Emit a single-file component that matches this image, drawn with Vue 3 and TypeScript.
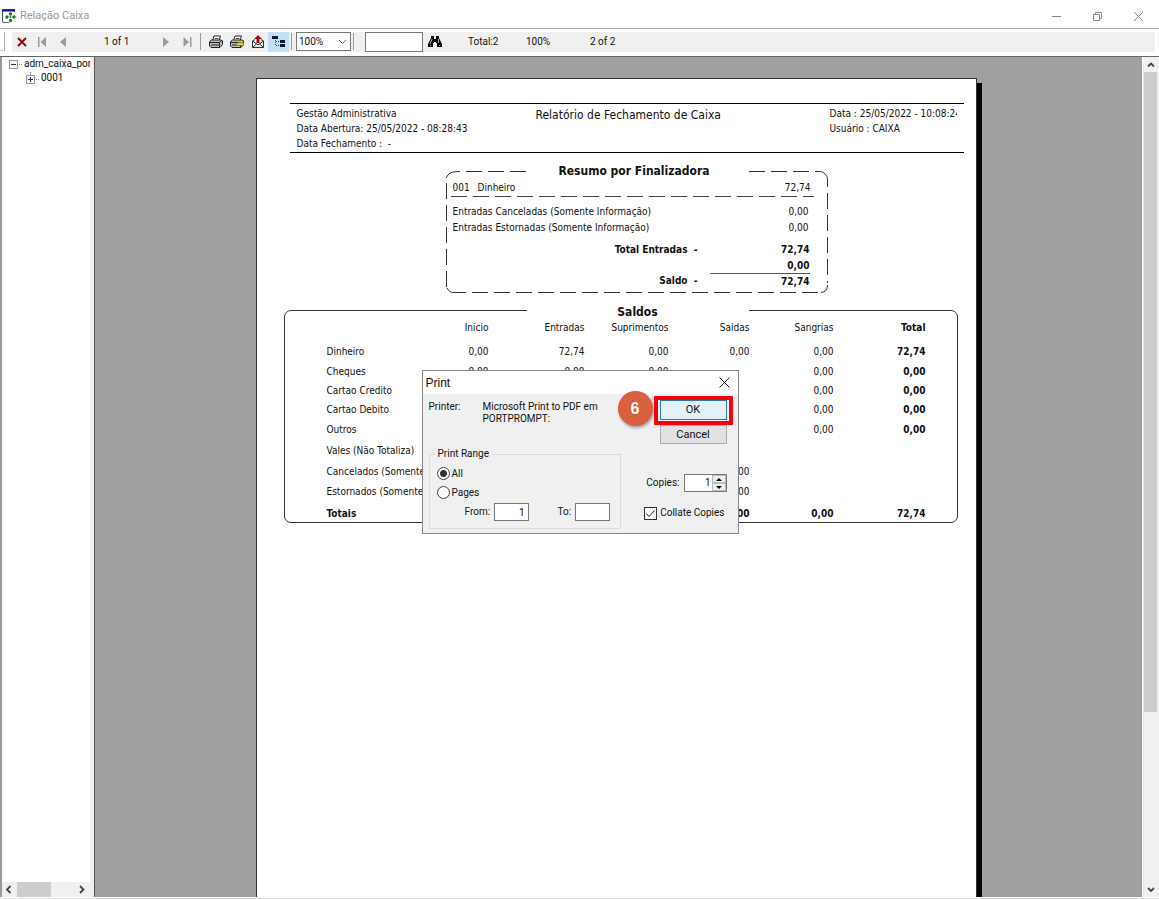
<script setup lang="ts">
import { ref } from 'vue'

interface BalanceRow {
  label: string
  values: string[]
  total: string
  size: string
  strong?: boolean
}

const columns = ['Inicio', 'Entradas', 'Suprimentos', 'Saidas', 'Sangrias']

const balances: BalanceRow[] = [
  { label: 'Dinheiro', values: ['0,00', '72,74', '0,00', '0,00', '0,00'], total: '72,74', size: 'h22' },
  { label: 'Cheques', values: ['0,00', '0,00', '0,00', '', '0,00'], total: '0,00', size: 'h18' },
  { label: 'Cartao Credito', values: ['', '', '', '', '0,00'], total: '0,00', size: 'h20' },
  { label: 'Cartao Debito', values: ['', '', '', '', '0,00'], total: '0,00', size: 'h18' },
  { label: 'Outros', values: ['', '', '', '', '0,00'], total: '0,00', size: 'h22' },
  { label: 'Vales (Não Totaliza)', values: ['', '', '', '', ''], total: '', size: 'h20' },
  { label: 'Cancelados (Somente Informação)', values: ['', '', '', '0,00', ''], total: '', size: 'h22' },
  { label: 'Estornados (Somente Informação)', values: ['', '', '', '0,00', ''], total: '', size: 'h18' },
  { label: 'Totais', values: ['', '', '', '0,00', '0,00'], total: '72,74', size: 'h26', strong: true },
]

const range = ref('all')
const fromPage = ref('1')
const toPage = ref('')
const copies = ref('1')
const collate = ref(true)
const zoomLevel = ref('100%')
const search = ref('')
</script>

<template>
  <div class="window">
    <header class="titlebar">
      <svg class="app-icon" width="14" height="14" viewBox="0 0 14 14">
        <rect x="0" y="0" width="13" height="13" fill="#fff" stroke="none" />
        <path d="M.5 13V.5H12.500V3" fill="none" stroke="#444a60" />
        <path d="M0 1.500H13" stroke="#10109a" stroke-width="2" />
        <path d="M.5 13.500H7" stroke="#667" />
        <g fill="#157a20">
          <circle cx="8.500" cy="5" r="1.700" /><circle cx="5" cy="8" r="1.700" />
          <circle cx="12" cy="8" r="1.700" /><circle cx="8.500" cy="11.500" r="1.700" /><circle cx="8.500" cy="8" r="1" />
        </g>
      </svg>
      <span class="caption">Relação Caixa</span>
      <div class="caption-buttons">
        <button aria-label="Minimize"><svg width="11" height="11" viewBox="0 0 11 11"><path d="M1 5.500H10" stroke="#888" /></svg></button>
        <button aria-label="Restore"><svg width="11" height="11" viewBox="0 0 11 11" fill="none" stroke="#888"><path d="M1.500 3.500H7.500V9.500H1.500ZM3.500 3.500V1.500H9.500V7.500H7.500" /></svg></button>
        <button aria-label="Close"><svg width="11" height="11" viewBox="0 0 11 11"><path d="M1 1L10 10M10 1L1 10" stroke="#888" /></svg></button>
      </div>
    </header>

    <div class="toolbar">
      <span class="grip"></span>
      <div class="tools">
        <button class="tool close-tool" aria-label="Close report"><svg width="10" height="10" viewBox="0 0 10 10"><path d="M1 1L9 9M9 1L1 9" stroke="#900c0c" stroke-width="2" /></svg></button>
        <button class="tool" aria-label="First page"><svg width="10" height="12" viewBox="0 0 10 12" fill="#9b9b9b"><path d="M1 1H2.500V11H1ZM9 1V11L3.500 6Z" /></svg></button>
        <button class="tool" aria-label="Previous page"><svg width="10" height="12" viewBox="0 0 10 12" fill="#9b9b9b"><path d="M8 1V11L2 6Z" /></svg></button>
        <span class="page-count">1 of 1</span>
        <button class="tool" aria-label="Next page"><svg width="10" height="12" viewBox="0 0 10 12" fill="#9b9b9b"><path d="M2 1V11L8 6Z" /></svg></button>
        <button class="tool" aria-label="Last page"><svg width="10" height="12" viewBox="0 0 10 12" fill="#9b9b9b"><path d="M8 1H9.500V11H8ZM1.500 1V11L7 6Z" /></svg></button>
        <span class="sep"></span>
        <button class="tool" aria-label="Print">
          <svg width="16" height="14" viewBox="0 0 16 14">
            <path d="M4.500 5.500L6 1H12.500L11 5.500" fill="#fff" stroke="#222" />
            <path d="M6.500 3.500H10.500" stroke="#555" />
            <path d="M1.500 6.500L3.500 5H13.500L14.500 6V9.500L12 12.500H3L1.500 11Z" fill="#bbb" stroke="#222" />
            <path d="M1.500 7.500H11.500V12M11.500 7.500L14 5.500M3 10H11" fill="none" stroke="#222" />
            <path d="M9 9H10.500" stroke="#3c3" />
          </svg>
        </button>
        <button class="tool" aria-label="Print setup">
          <svg width="16" height="14" viewBox="0 0 16 14">
            <path d="M4.500 5.500L6 1H12.500L11 5.500" fill="#fff" stroke="#222" />
            <path d="M6.500 3.500H10.500" stroke="#555" />
            <path d="M1.500 6.500L3.500 5H13.500L14.500 6V9.500L12 12.500H3L1.500 11Z" fill="#bbb" stroke="#222" />
            <path d="M1.500 7.500H11.500V12M3 10H8" fill="none" stroke="#222" />
            <path d="M7 9.500L9 7.500H14.500V10.500H9Z" fill="#e5cd1c" stroke="#847510" stroke-width=".7" />
          </svg>
        </button>
        <button class="tool" aria-label="Export">
          <svg width="14" height="14" viewBox="0 0 14 14">
            <path d="M1.500 6L4 4.500M12.500 6L10 4.500M1.500 6V12.500H12.500V6L7 10L1.500 6M1.500 12.500L5.500 9M12.500 12.500L8.500 9" fill="#fff" stroke="#203545" />
            <path d="M7 0L11 4H8.500V8H5.500V4H3Z" fill="#a01018" />
          </svg>
        </button>
        <button class="tool tree-tool" aria-label="Toggle group tree">
          <svg width="14" height="12" viewBox="0 0 14 12">
            <path d="M0 0H6V3H0ZM8 4H13V7H8ZM8 8H13V11H8Z" fill="#111b2e" />
            <path d="M3.500 4V9.500H7M4 5.500H7" fill="none" stroke="#444" stroke-dasharray="1 1" />
          </svg>
        </button>
        <span class="sep short"></span>
        <select v-model="zoomLevel" class="zoom" aria-label="Zoom"><option>100%</option></select>
        <span class="sep short"></span>
        <input v-model="search" class="search" type="text" aria-label="Search text" />
        <button class="tool find" aria-label="Search">
          <svg width="14" height="13" viewBox="0 0 14 13">
            <path d="M3 1H6V4H8V1H11V3L14 9V12H9V8H8V7H6V8H5V12H0V9L3 3Z" fill="#000" />
            <path d="M4 4L2 9M10.500 4V8M2 10.500H3M11 10.500H12" stroke="#ddd" stroke-width=".8" />
          </svg>
        </button>
        <span class="stat total">Total:2</span>
        <span class="stat percent">100%</span>
        <span class="stat">2 of 2</span>
      </div>
    </div>

    <main class="body">
      <aside class="tree">
        <ul class="nodes">
          <li class="node">
            <svg width="15" height="9" viewBox="0 0 15 9"><rect x=".5" y=".5" width="8" height="8" fill="#f6f6f6" stroke="#999" /><path d="M2 4.500H7" stroke="#234" /><path d="M10 4.500H13" stroke="#888" stroke-dasharray="1 1" /></svg>
            <span>adm_caixa_por</span>
          </li>
          <li class="node child">
            <svg width="15" height="12" viewBox="0 0 15 12"><path d="M4.500 0V3M10 7.500H13" stroke="#888" stroke-dasharray="1 1" /><rect x=".5" y="3.500" width="8" height="8" fill="#f6f6f6" stroke="#999" /><path d="M2 7.500H7M4.500 5V10" stroke="#336" /></svg>
            <span>0001</span>
          </li>
        </ul>
        <div class="hscroll">
          <svg width="15" height="15" viewBox="0 0 15 15"><path d="M8.500 4L5 7.500L8.500 11" fill="none" stroke="#444" stroke-width="1.800" /></svg>
          <span class="hthumb"></span>
          <svg width="15" height="15" viewBox="0 0 15 15"><path d="M6 4L9.500 7.500L6 11" fill="none" stroke="#444" stroke-width="1.800" /></svg>
        </div>
      </aside>

      <section class="viewer">
        <article class="paper">
          <header class="report-head">
            <div class="head-left">
              <p>Gestão Administrativa</p>
              <p>Data Abertura: 25/05/2022 - 08:28:43</p>
              <p>Data Fechamento :&nbsp; -</p>
            </div>
            <h1>Relatório de Fechamento de Caixa</h1>
            <div class="head-right">
              <p>Data : 25/05/2022 - 10:08:24</p>
              <p>Usuário : CAIXA</p>
            </div>
          </header>

          <section class="summary">
            <svg class="dashes" width="382" height="122" viewBox="0 0 382 122" fill="none" stroke="#333">
              <path d="M.5 7Q.5 5 3 3Q5 .5 14 .5" />
              <path d="M20 .5H80M303 .5H374" stroke-dasharray="16 6" />
              <path d="M.5 12V116M381.500 22V112" stroke-dasharray="16 6" />
              <path d="M371 .5H374Q377 .5 379 3Q381.500 5 381.500 8V16" />
              <path d="M1 117Q3 121.500 8 121.500H20M375 121.500Q381.500 121 381.500 114" />
              <path d="M26 121.500H376" stroke-dasharray="16 6" />
            </svg>
            <h2>Resumo por Finalizadora</h2>
            <div class="line first"><span class="code">001</span><span>Dinheiro</span><span class="amount">72,74</span></div>
            <div class="line"><span>Entradas Canceladas (Somente Informação)</span><span class="amount">0,00</span></div>
            <div class="line"><span>Entradas Estornadas (Somente Informação)</span><span class="amount">0,00</span></div>
            <div class="sum gap"><span>Total Entradas&nbsp; -</span><span class="sum-value">72,74</span></div>
            <div class="sum"><span></span><span class="sum-value">0,00</span></div>
            <div class="sum"><span>Saldo&nbsp; -</span><span class="sum-value ruled">72,74</span></div>
          </section>

          <section class="balances">
            <h2>Saldos</h2>
            <table>
              <colgroup>
                <col class="c-label" /><col class="c-inicio" /><col class="c-entradas" /><col class="c-supr" />
                <col class="c-saidas" /><col class="c-sangrias" /><col class="c-total" />
              </colgroup>
              <thead>
                <tr class="h20">
                  <td></td>
                  <th v-for="c in columns" :key="c" scope="col">{{ c }}</th>
                  <th scope="col" class="bold">Total</th>
                </tr>
              </thead>
              <tbody>
                <tr v-for="row in balances" :key="row.label" :class="[row.size, { bold: row.strong }]">
                  <th scope="row">{{ row.label }}</th>
                  <td v-for="(v, i) in row.values" :key="i">{{ v }}</td>
                  <td class="bold">{{ row.total }}</td>
                </tr>
              </tbody>
            </table>
          </section>
        </article>
      </section>

      <div class="vscroll">
        <svg width="14" height="15" viewBox="0 0 14 15"><path d="M4 9.500L7 6.500L10 9.500" fill="none" stroke="#444" stroke-width="1.800" /></svg>
        <div class="track"><span class="vthumb"></span></div>
        <svg width="14" height="15" viewBox="0 0 14 15"><path d="M4 6L7 9L10 6" fill="none" stroke="#444" stroke-width="1.800" /></svg>
      </div>
    </main>
    <footer class="bottom-edge"></footer>

    <div class="modal-layer">
      <form class="dialog" role="dialog" aria-label="Print" @submit.prevent>
        <div class="dialog-title">
          <span>Print</span>
          <button type="button" class="x" aria-label="Close dialog"><svg width="11" height="11" viewBox="0 0 11 11"><path d="M.5 .5L10.500 10.500M10.500 .5L.5 10.500" stroke="#222" /></svg></button>
        </div>
        <div class="dialog-body">
          <div class="left-col">
            <div class="printer"><span class="printer-label">Printer:</span><span>Microsoft Print to PDF em<br />PORTPROMPT:</span></div>
            <fieldset>
              <legend>Print Range</legend>
              <label class="choice"><input v-model="range" type="radio" value="all" name="range" />All</label>
              <label class="choice"><input v-model="range" type="radio" value="pages" name="range" />Pages</label>
              <div class="pages">
                <label class="from">From:<input v-model="fromPage" type="text" /></label>
                <label class="to">To:<input v-model="toPage" type="text" /></label>
              </div>
            </fieldset>
          </div>
          <div class="right-col">
            <div class="highlight"><button type="submit" class="btn ok">OK</button><span class="badge">6</span></div>
            <button type="button" class="btn cancel">Cancel</button>
            <div class="copies">
              <label for="copies">Copies:</label>
              <div class="spin">
                <input id="copies" v-model="copies" type="text" />
                <div class="spin-buttons">
                  <button type="button" aria-label="More copies"><svg width="6" height="3" viewBox="0 0 6 3"><path d="M0 3L3 0L6 3Z" /></svg></button>
                  <button type="button" aria-label="Fewer copies"><svg width="6" height="3" viewBox="0 0 6 3"><path d="M0 0L3 3L6 0Z" /></svg></button>
                </div>
              </div>
            </div>
            <label class="collate"><input v-model="collate" type="checkbox" /><svg width="13" height="13" viewBox="0 0 11 11"><path v-if="collate" d="M1.500 5.500L4 8.500L9.500 2.500" fill="none" stroke="#222" /></svg>Collate Copies</label>
          </div>
        </div>
      </form>
    </div>
  </div>
</template>

<style>
html, body { margin: 0; overflow: hidden; }
</style>

<style scoped>
* { box-sizing: border-box; }
.window {
  position: relative;
  display: flex;
  flex-direction: column;
  height: 100vh;
  overflow: hidden;
  background: #fff;
  color: #111;
  font: 10px/14px Roboto, "Liberation Sans", Arial, sans-serif;
}
button { padding: 0; border: 0; background: none; color: inherit; font: inherit; }
input, select { margin: 0; font: inherit; color: inherit; border-radius: 0; }
p, h1, h2, ul { margin: 0; padding: 0; }
svg { display: block; flex: none; }

.titlebar { flex: none; display: flex; align-items: center; height: 29px; padding: 4px 0 0 2px; border-bottom: 1px solid #aaa; }
.caption { margin-left: 4px; color: #999; font-size: 11px; }
.caption-buttons { display: flex; margin-left: auto; }
.caption-buttons button { display: grid; place-items: center; width: 41px; height: 24px; }

.toolbar { flex: none; display: flex; align-items: center; height: 27px; padding: 0 4px 2px 0; }
.grip { width: 5px; height: 19px; margin-right: 7px; border-right: 1px solid #aaa; border-bottom: 1px solid #ccc; }
.tools { flex: 1; display: flex; align-items: center; height: 20px; background: #f0f0f0; }
.tool { flex: none; display: grid; place-items: center; width: 21px; height: 20px; }
.close-tool { width: 19px; }
.page-count { width: 82px; padding-left: 31px; white-space: nowrap; }
.sep { flex: none; width: 1px; height: 17px; margin: 0 4px 0 3px; background: #999; }
.tree-tool { background: #c4def5; }
.sep.short { margin: 0 4px 0 2px; }
.zoom {
  appearance: none; flex: none; width: 55px; height: 19px; padding: 0 2px; border: 1px solid #777;
  background: #fff url("data:image/svg+xml,%3Csvg xmlns='http://www.w3.org/2000/svg' width='9' height='6'%3E%3Cpath d='M1 1L4.500 4.500L8 1' fill='none' stroke='%23666'/%3E%3C/svg%3E") no-repeat right 3px center;
}
.search { flex: none; width: 58px; height: 20px; margin-left: 7px; border: 1px solid #777; background: #fff; }
.find { width: 24px; }
.stat { white-space: nowrap; }
.total { width: 58px; margin-left: 21px; }
.percent { width: 64px; }

.body { flex: 1; display: flex; min-height: 0; border-top: 1px solid #666; }
.tree { flex: none; display: flex; flex-direction: column; width: 94px; padding-right: 4px; border-left: 2px solid #999; background: #f0f0f0; }
.nodes { flex: 1; overflow: hidden; list-style: none; background: #fff; }
.node { display: flex; align-items: center; height: 14px; padding-left: 7px; white-space: nowrap; }
.child { padding-left: 24px; }
.hscroll { display: flex; height: 15px; margin-right: 1px; }
.hthumb { width: 34px; margin-right: auto; background: #cdcdcd; }

.viewer { flex: 1; display: flex; justify-content: center; min-width: 0; padding: 21px 0 0 0; overflow: hidden; background: #a0a0a0; border-left: 1px solid #555; }
.paper {
  flex: 0 1 721px;
  height: 110%;
  margin-right: 5px;
  padding: 24px 12px 0 33px;
  border: 1px solid #333;
  border-bottom: 0;
  background: #fff;
  box-shadow: 5px 5px 0 #000;
  font: 10px/16px "DejaVu Sans Condensed", "DejaVu Sans", sans-serif;
}
.report-head { display: flex; justify-content: space-between; height: 50px; padding: 2px 7px 0 7px; border: solid #000; border-width: 1px 0; white-space: nowrap; }
.report-head p { line-height: 15px; }
.head-left { flex: 0 0 239px; }
.report-head h1 { flex: 1; font-weight: normal; font-size: 12px; line-height: 18px; }
.head-right { flex: 0 0 127px; overflow: hidden; }

h2 { font-size: 12px; line-height: 16px; text-align: center; background: #fff; }
.summary { position: relative; display: flow-root; width: 382px; height: 122px; margin: 18px 0 17px 156px; }
.summary > * { position: relative; }
.summary .dashes { position: absolute; inset: 0; }
.summary h2 { width: 223px; height: 16px; margin: -8px 0 0 80px; padding-right: 6px; }
.line { display: flex; height: 16px; margin: 0 14px 0 5px; padding: 0 5px 0 2px; }
.line.first { height: 18px; margin-bottom: 7px; padding: 1px 3px 0 2px; background: repeating-linear-gradient(90deg, #444 0 16px, transparent 16px 22px) no-repeat 0 100% / 100% 1px; }
.code { width: 25px; }
.amount { margin-left: auto; }
.sum { display: flex; justify-content: flex-end; gap: 12px; height: 15px; margin-right: 18px; font-weight: bold; }
.sum.gap { margin-top: 6px; height: 16px; }
.sum-value { width: 100px; text-align: right; }
.ruled { border-top: 1px solid #555; }

.balances { display: flow-root; height: 213px; width: 674px; margin-left: -6px; border: 1px solid #333; border-radius: 7px; }
.balances h2 { width: 222px; height: 16px; margin: -7px 0 0 242px; }
.balances table { width: 100%; table-layout: fixed; border-collapse: collapse; }
.balances th, .balances td { padding: 0; font-weight: normal; text-align: right; white-space: nowrap; }
.balances tbody th { padding-left: 42px; text-align: left; overflow: hidden; }
.balances thead th { vertical-align: top; }
.balances td:last-child, .balances th:last-child { padding-right: 31px; }
.balances .bold, .balances .bold th, .balances .bold td { font-weight: bold; }
.c-label { width: 150px; }
.c-inicio { width: 54px; }
.c-entradas { width: 96px; }
.c-supr { width: 84px; }
.c-saidas { width: 81px; }
.c-sangrias { width: 84px; }
.h18 { height: 18px; }
.h20 { height: 21px; }
.h22 { height: 22px; }
.h26 { height: 26px; }
tbody .h20 { height: 20px; }

.vscroll { flex: none; display: flex; flex-direction: column; width: 17px; padding: 0 2px 0 1px; background: #f0f0f0; border-left: 1px solid #fff; }
.track { flex: 1; }
.vthumb { display: block; height: 79%; background: #cdcdcd; }
.bottom-edge { flex: none; height: 2px; border-top: 1px solid #fff; background: #ddd; }

.modal-layer { position: absolute; inset: 0; display: grid; place-items: center; padding: 5px 0 0 1px; }
.dialog { width: 317px; border: 1px solid #888; background: #f0f0f0; }
.dialog-title { display: flex; align-items: center; justify-content: space-between; height: 23px; padding: 0 8px 0 3px; background: #fff; font: 12px/14px "Liberation Sans", Arial, sans-serif; }
.x { display: grid; place-items: center; }
.dialog-body { display: flex; height: 139px; }
.left-col { width: 198px; padding: 7px 0 0 6px; display: flex; flex-direction: column; }
.printer { display: flex; height: 46px; line-height: 12px; white-space: nowrap; }
.printer-label { width: 54px; flex: none; }
fieldset { height: 82px; min-width: 0; margin: 0; padding: 3px 0 0 7px; border: 1px solid #dcdcdc; }
legend { height: 14px; padding: 0 3px; margin-left: -2px; }
.choice { display: flex; align-items: center; gap: 2px; height: 19px; }
.choice input { appearance: none; width: 13px; height: 13px; border: 1px solid #444; border-radius: 50%; background: #fff; }
.choice input:checked { background: radial-gradient(circle, #333 0 3px, #fff 4px); }
.pages { display: flex; gap: 29px; padding: 1px 9px 0 28px; }
.pages label { display: flex; align-items: center; justify-content: space-between; }
.from { width: 64px; }
.to { width: 52px; }
.pages input { width: 35px; height: 18px; padding: 0 3px; border: 1px solid #777; background: #fff; text-align: right; }
.right-col { flex: 1; display: flex; flex-direction: column; align-items: flex-end; padding: 2px 5px 0 0; }
.highlight { position: relative; width: 79px; height: 29px; padding: 0 2px; border: 4px solid #f5000c; border-radius: 1px; }
.btn { display: block; width: 67px; height: 20px; font-size: 11px; }
.ok { border: 1px solid #2a7ab0; background: #e3f1fb; }
.cancel { height: 19px; border: 1px solid #adadad; background: #e1e1e1; margin: 0 6px 0 0; }
.badge { position: absolute; left: -40px; top: -9px; width: 35px; height: 35px; border-radius: 50%; background: #d9603f; color: #fff; font: bold 16px/35px "Liberation Sans", sans-serif; text-align: center; box-shadow: 1px 2px 3px #0005; }
.copies { display: flex; align-items: center; gap: 4px; margin: 30px 6px 0 0; }
.spin { display: flex; width: 43px; height: 18px; border: 1px solid #777; background: #fff; }
.spin input { width: 27px; padding: 0 1px; border: 0; text-align: right; background: none; }
.spin-buttons { display: flex; flex-direction: column; flex: 1; }
.spin-buttons button { flex: 1; display: grid; place-items: center; border: 1px solid #bbb; background: #eee; }
.collate { position: relative; display: flex; align-items: center; gap: 3px; margin: 14px 8px 0 0; white-space: nowrap; }
.collate input { position: absolute; opacity: 0; left: 0; width: 12px; height: 12px; }
.collate svg { border: 1px solid #333; background: #fff; }
</style>
